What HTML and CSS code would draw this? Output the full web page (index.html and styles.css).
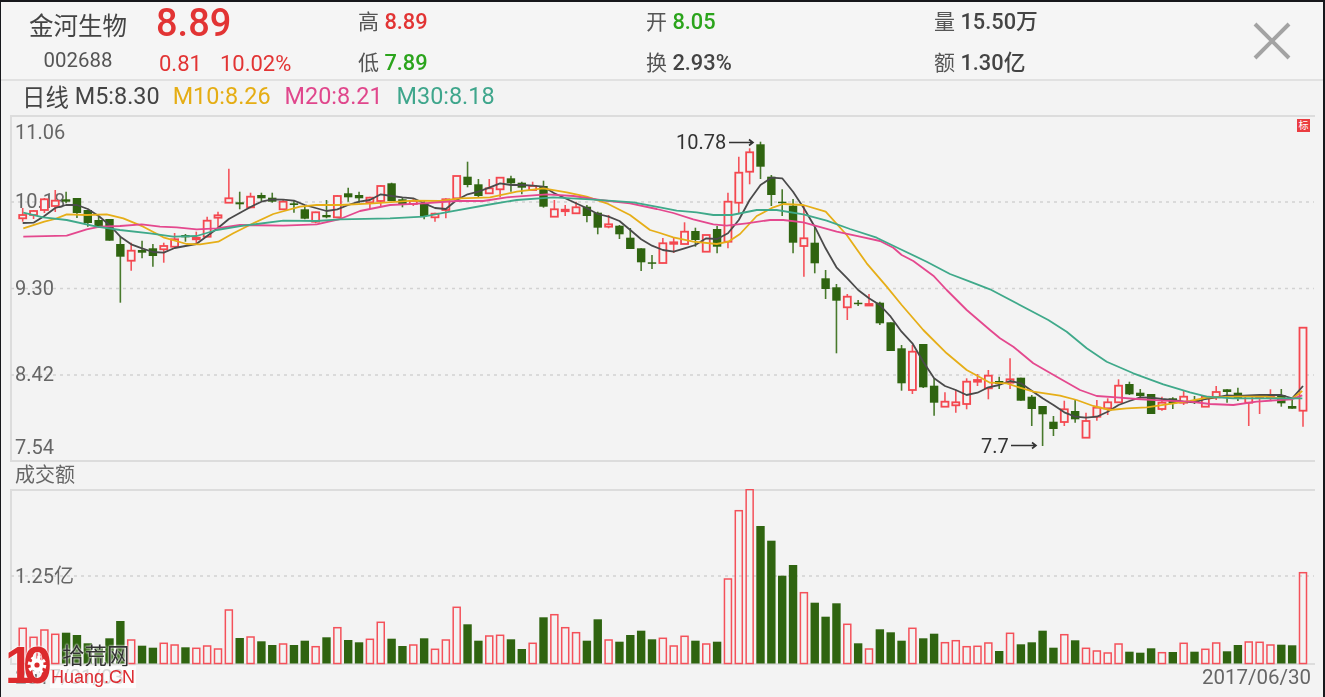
FILE: index.html
```html
<!DOCTYPE html>
<html lang="zh-CN">
<head>
  <meta charset="UTF-8">
  <title>金河生物 002688</title>
  <link rel="stylesheet" href="styles.css">
</head>
<body>
  <div class="screen">
    <header class="quote">
      <div class="stock">
        <div class="stock-name">金河生物</div>
        <div class="stock-code">002688</div>
      </div>
      <div class="price">
        <div class="price-now">8.89</div>
        <div class="price-change"><span>0.81</span><span>10.02%</span></div>
      </div>
      <div class="stats">
        <div class="stat"><span class="stat-key">高</span> <span class="up">8.89</span></div>
        <div class="stat"><span class="stat-key">开</span> <span class="down">8.05</span></div>
        <div class="stat"><span class="stat-key">量</span> 15.50万</div>
        <div class="stat"><span class="stat-key">低</span> <span class="down">7.89</span></div>
        <div class="stat"><span class="stat-key">换</span> 2.93%</div>
        <div class="stat"><span class="stat-key">额</span> 1.30亿</div>
      </div>
      <svg class="close" viewBox="0 0 38 38">
        <path d="M2 2L36 36M36 2L2 36"/>
      </svg>
    </header>

    <div class="legend">
      <span class="legend-period">日线</span>
      <span class="ma5">M5:8.30</span>
      <span class="ma10">M10:8.26</span>
      <span class="ma20">M20:8.21</span>
      <span class="ma30">M30:8.18</span>
    </div>

    <div class="panel panel-price">
      <svg id="priceChart" viewBox="10 115 1305 347"></svg>
      <span class="badge">标</span>
    </div>

    <div class="volume-title">成交额</div>

    <div class="panel panel-volume">
      <svg id="volumeChart" viewBox="10 489 1305 176"></svg>
    </div>

    <div class="dates">
      <span>2017/01/03</span>
      <span>2017/06/30</span>
    </div>

    <div class="watermark">
      <div class="wm-logo">10</div>
      <svg class="wm-gear" viewBox="0 0 20 20">
        <circle class="wm-teeth" cx="10" cy="10" r="7.5"/>
        <circle class="wm-disc" cx="10" cy="10" r="6.5"/>
        <circle class="wm-hub" cx="10" cy="10" r="2.6"/>
      </svg>
      <div class="wm-name">拾荒网</div>
      <div class="wm-url">Huang.CN</div>
    </div>
  </div>
  <script src="script.js"></script>
</body>
</html>
```

FILE: styles.css
```css
* {
  box-sizing: border-box;
}

body {
  margin: 0;
  background: #17181c;
  overflow: hidden;
}

.screen {
  position: relative;
  margin: 2px 2px 0 1px;
  height: 695px;
  background: #f3f3f3;
  color: #555;
  font-family: Roboto, "Noto Sans CJK SC", sans-serif;
  font-size: 20px;
  filter: blur(.35px);
}

.quote {
  display: flex;
  height: 79px;
  padding-left: 28px;
  background: #f5f5f5;
  border-bottom: 2px solid #e1e1e1;
}

.stock {
  width: 128px;
  padding-top: 9px;
}

.stock-name {
  width: 98px;
  font-size: 24.5px;
  line-height: 32px;
  text-align: center;
  color: #444;
}

.stock-code {
  width: 98px;
  margin-top: 2px;
  font-size: 20.4px;
  line-height: 30px;
  text-align: center;
}

.price {
  width: 201px;
  margin-left: -1px;
  color: #e23434;
}

.price-now {
  height: 42px;
  font-size: 38px;
  font-weight: 500;
  line-height: 42px;
}

.price-change {
  display: flex;
  gap: 18px;
  margin: 4px 0 0 3px;
  font-size: 22px;
  line-height: 32px;
}

.stats {
  display: grid;
  grid-template-columns: repeat(3, 288px);
  grid-auto-rows: 41px;
  margin: -1px 0 0 1px;
  font-size: 21.8px;
  font-weight: 500;
  line-height: 41px;
  color: #444;
}

.stat-key {
  font-size: 21px;
  font-weight: 400;
  color: #555;
}

.up {
  color: #e23434;
}

.down {
  color: #2ba41c;
}

.close {
  width: 38px;
  height: 38px;
  margin: 20px 0 0 31px;
  fill: none;
  stroke: #a3a3a3;
  stroke-width: 4;
}

.legend {
  display: flex;
  height: 34px;
  align-items: center;
  padding: 0 0 4px 21px;
  font-size: 23.4px;
  color: #444;
}

.legend-period {
  margin-right: 6px;
}

.ma10 {
  margin-left: 13px;
  color: #e5ad14;
}

.ma20 {
  margin-left: 14px;
  color: #e0478c;
}

.ma30 {
  margin-left: 14px;
  color: #3fa68c;
}

.panel {
  position: relative;
  margin-left: 9px;
  width: 1305px;
}

.panel svg {
  display: block;
  width: 1305px;
}

.panel-price svg {
  height: 347px;
}

.panel-volume svg {
  height: 176px;
}

.frame {
  fill: none;
  stroke: #dcdcdc;
  stroke-width: 2;
}

.grid {
  stroke: #d2d2d2;
  stroke-width: 1.3;
  stroke-dasharray: 3 4;
}

.axis-label {
  fill: #666;
  font-size: 20px;
}

.mark-label {
  fill: #333;
  font-size: 20px;
}

.mark-arrow {
  fill: none;
  stroke: #333;
  stroke-width: 1.6;
}

.wick-up {
  stroke: #f4535b;
  stroke-width: 1.6;
}

.wick-down {
  stroke: #48792c;
  stroke-width: 1.6;
}

.body-up {
  fill: #f3f3f3;
  stroke: #f4474f;
  stroke-width: 1.8;
}

.body-down {
  fill: #2f6410;
}

.bar-up {
  fill: none;
  stroke: #f4515a;
  stroke-width: 1.5;
}

.bar-down {
  fill: #2f6410;
}

.line {
  fill: none;
  stroke-width: 1.8;
  stroke-linejoin: round;
}

.line-5 {
  stroke: #4a4a4a;
}

.line-10 {
  stroke: #e6ae17;
}

.line-20 {
  stroke: #e4488e;
}

.line-30 {
  stroke: #3fa98a;
}

.badge {
  position: absolute;
  top: 4px;
  right: 5px;
  width: 13px;
  height: 13px;
  background: #ea3c40;
  color: #fff;
  font-size: 10px;
  line-height: 13px;
  text-align: center;
}

.volume-title {
  height: 27px;
  padding-left: 14px;
  line-height: 27px;
  color: #666;
}

.dates {
  display: flex;
  justify-content: space-between;
  width: 1310px;
  padding-left: 14px;
  height: 25px;
  font-size: 20.5px;
  line-height: 24px;
  color: #666;
}

.watermark {
  position: absolute;
  left: 4px;
  bottom: 5px;
  width: 132px;
  height: 48px;
}

.wm-logo {
  position: absolute;
  top: -7px;
  left: 0;
  font-family: "Liberation Sans", sans-serif;
  font-size: 52px;
  font-weight: bold;
  letter-spacing: -11px;
  line-height: 56px;
  color: #dc2a2c;
  text-shadow: 0 0 2px #fff, 0 0 2px #fff;
}

.wm-gear {
  position: absolute;
  top: 11px;
  left: 22px;
  width: 20px;
  height: 20px;
}

.wm-teeth {
  fill: none;
  stroke: #fff;
  stroke-width: 3.6;
  stroke-dasharray: 3 2.9;
}

.wm-disc {
  fill: #fff;
}

.wm-hub {
  fill: #dc2a2c;
}

.wm-name {
  position: absolute;
  top: -1px;
  left: 57px;
  font-size: 22.5px;
  line-height: 26px;
  color: #333;
  text-shadow: 0 0 2px #fff, 0 0 2px #fff;
}

.wm-url {
  position: absolute;
  top: 22px;
  left: 45px;
  padding: 0 1px;
  font-family: "Liberation Sans", sans-serif;
  font-size: 18px;
  line-height: 22px;
  color: #dc2a30;
  background: rgba(255, 255, 255, .75);
}
```

FILE: script.js
```js
// all chart values are y positions in page pixels, one candle every 10.85px
const STEP = 10.85;
const FIRST_X = 22.7;
const BAR_W = 7;
const NS = 'http://www.w3.org/2000/svg';

// [bodyTop, bodyBottom, high, low, up?]
const candles = [
  [215, 218.3, 208, 221.7, 1], [211, 215, 210, 219, 1], [199.3, 210, 198, 213, 1], [200.7, 206, 190, 212, 1],
  [199.3, 201.7, 191.7, 203.3, 0], [198, 213, 198, 218, 0], [210, 223, 210, 226.7, 0], [220, 226.7, 217, 228, 0],
  [219, 240.7, 219, 240.7, 0], [244, 256.7, 236.7, 302.7, 0], [250.7, 260.7, 242.7, 270.7, 1], [250, 252.7, 240.7, 258.3, 0],
  [248.3, 256, 244, 266.7, 0], [246, 249.3, 242.7, 262.7, 1], [239.3, 246.7, 233, 247, 1], [235, 237.3, 234, 241.7, 0],
  [237.7, 239.3, 231.7, 245, 1], [220.7, 236.7, 216.7, 237.3, 1], [215.3, 217.7, 211.7, 229.3, 1], [198.3, 202.7, 168.7, 202.7, 1],
  [202.3, 204.3, 191.7, 209.3, 0], [196.7, 207.3, 192.7, 208.3, 1], [195, 198.3, 192.7, 201, 0], [197.7, 201.7, 192.7, 202.7, 0],
  [201.7, 209.3, 200, 210, 1], [203.3, 205, 200.7, 212.7, 0], [209.3, 218.7, 205, 219.3, 0], [212.3, 221.7, 211.7, 223.3, 1],
  [215, 217.3, 200, 218.3, 0], [196, 217.3, 195, 218, 1], [193.3, 197.3, 187.7, 201.7, 0], [195, 198.3, 191.7, 202.7, 0],
  [197.7, 202.3, 196.7, 209, 1], [186, 201, 185, 206.7, 1], [183.3, 201, 182.7, 201, 0], [199.3, 204, 198, 207.3, 0],
  [201, 204, 198, 206, 1], [203.3, 216, 200.7, 219.3, 0], [213.7, 217.3, 212.7, 221.7, 1], [199.3, 210, 198.3, 218.3, 1],
  [176, 198.3, 176, 198.3, 1], [176.7, 185, 161.7, 187.3, 0], [184.3, 196, 179, 197.3, 0], [188.3, 193.3, 179, 193.3, 1],
  [177.7, 189.3, 177.7, 197.3, 1], [178.3, 183.3, 175.7, 191.7, 0], [182.7, 187.7, 181.7, 194.3, 0], [186, 190, 181.7, 190, 1],
  [186, 206.7, 180.7, 207.7, 0], [209.3, 216.7, 200, 216.7, 1], [209.7, 211, 205, 216, 1], [207.3, 213.3, 201.7, 213.3, 1],
  [206.7, 216, 205, 222.3, 0], [212.7, 227.7, 211.7, 234.3, 0], [224.3, 226.7, 215, 228.3, 1], [225.7, 234.3, 225, 239, 0],
  [237.7, 249, 228, 249, 0], [248.3, 262.3, 248.3, 271, 0], [262.3, 263, 255, 269, 0], [243.3, 263, 238, 263.3, 1],
  [242.3, 243.5, 238, 253, 1], [231.7, 244, 222.3, 244, 1], [231, 240, 227.7, 246.7, 0], [235, 251.7, 235, 251.7, 1],
  [229, 246.7, 226, 253.3, 0], [201.7, 241.7, 192.7, 248.3, 1], [172.7, 202.7, 156.7, 213.3, 1], [152.3, 171.7, 148.3, 184.3, 1],
  [144.3, 166.7, 141.7, 179, 0], [176.7, 195, 175, 206, 0], [201.7, 203, 189.3, 216, 0], [205.7, 242.7, 199, 253.3, 0],
  [238.3, 246, 205, 276.7, 1], [242.7, 263.3, 226.7, 273.3, 0], [278.3, 289, 270, 299, 0], [287.3, 300.7, 284, 353.3, 0],
  [296.7, 307.3, 294, 320, 1], [302.7, 303.3, 300, 306, 0], [304, 305.3, 294, 305.3, 1], [302.7, 323.3, 301.7, 325, 0],
  [322.3, 351, 322.3, 351, 0], [348.3, 383.3, 345, 390.7, 0], [351.7, 390, 345, 394, 1], [344, 387.3, 344, 388, 0],
  [385.7, 402.7, 378.3, 415.7, 0], [401.7, 406.7, 392.3, 406.7, 1], [402.3, 405.3, 390, 412.7, 1], [381.7, 404, 378.3, 409.3, 1],
  [380, 381.7, 374, 386, 1], [375.7, 388.3, 370, 399.3, 1], [381, 384, 376.7, 389, 0], [379.3, 382.7, 358.3, 389, 1],
  [377.7, 400.7, 377.7, 400.7, 0], [396.7, 409, 395, 426, 0], [406, 414.3, 406, 446, 0], [421.7, 429, 416, 436, 0],
  [409.3, 422, 400.7, 426, 1], [411, 419.3, 400, 422.7, 0], [421, 437.7, 412.7, 437.7, 1], [407.7, 416.7, 400, 420.7, 1],
  [402.3, 408.3, 398.3, 415, 1], [385.7, 402.3, 379.3, 402.7, 1], [384, 394.3, 381.7, 395, 0], [392.7, 396, 389, 398.3, 0],
  [394, 414, 394, 414, 0], [402.7, 409, 396.7, 410.7, 1], [398.3, 403.3, 397.3, 409, 0], [396.7, 402.7, 391, 405, 1],
  [400, 401.3, 396, 404, 0], [396.7, 406.7, 396, 407, 1], [392, 397.3, 386, 400, 1], [389.3, 392, 389.3, 402.7, 0],
  [392.7, 398.3, 387.7, 401, 0], [396, 402.7, 396, 426, 1], [396, 397.3, 395, 414, 1], [396, 397.3, 389.3, 400, 1],
  [395, 403.3, 389, 406.7, 0], [406, 408.7, 400, 408.7, 0], [327.7, 410.7, 327.7, 426.7, 1]
];

const volumes = [
  628.3, 637.3, 630, 634.3, 632.7, 635, 643.3, 648, 638.3, 621, 640, 645.7, 647.7, 643.3, 645, 647.3, 648.3, 646, 649, 610,
  638, 637, 641.3, 645, 644, 645, 640.7, 646.7, 637.3, 627.7, 640, 642.3, 639.3, 622.3, 638.7, 646, 645, 638.3, 649.3, 640,
  607.3, 624.3, 640.7, 636, 635.3, 639.3, 649, 643.3, 617.3, 614.7, 627.7, 632.7, 640.7, 619.3, 640, 641.7, 635, 630.7, 639.3, 638.3,
  646, 636.3, 640.7, 644, 641.7, 579, 510.7, 489.5, 526, 540.7, 575.7, 565, 592.7, 602.7, 616.7, 603.3, 624.3, 643.3, 649, 629.3,
  632.3, 640.7, 628.3, 638.3, 633.7, 642.7, 640.7, 646.7, 646.3, 643, 651, 633.3, 644.3, 642.3, 630.7, 647.7, 634.7, 640.3, 648.3, 651,
  653, 644, 651.7, 652.7, 648.3, 652.7, 652, 643.3, 651.7, 649.3, 643, 651.3, 645, 642, 642.3, 645, 644.7, 645.3, 572.7
];

const ma5 = [
  223, 222.7, 216, 208, 205, 205, 209, 216, 225, 236.7, 244.3, 248.3, 252, 252.7, 248, 246, 244, 236, 228, 219,
  213, 207, 201.7, 199.3, 199.7, 200.7, 205, 208, 211, 209.3, 205, 201.7, 200, 194.3, 196, 197.3, 198.3, 203.3, 208, 209,
  200, 194.3, 191.7, 187.7, 183.3, 185, 185, 185.7, 186.7, 193.3, 198.3, 203.3, 208.3, 214, 216.7, 221, 230, 239.3, 245.7, 250,
  251.7, 248.3, 245, 238.3, 239, 233.3, 220, 200, 185, 177.7, 178.3, 191.7, 208.3, 226.7, 248.3, 267.3, 278.3, 290, 298.3, 305,
  316.7, 331.7, 343.3, 361.7, 378.3, 386, 390, 395, 392.7, 387.3, 385, 381, 383.3, 390.7, 398.3, 405, 412.3, 416.7, 417.7, 416.7,
  411.7, 405, 401, 397.3, 397.7, 399, 400, 401.7, 402.3, 399, 397.3, 395.3, 396, 395.3, 395, 395, 395, 398.3, 386
];

const ma10 = '23.3,228.3 44.3,221.7 55,219 66.7,214.3 86.7,215 106.7,214.3 123.3,218.3 143.3,226.7 163.3,237.3 186.7,244 200,244.3 218.3,241.7 233.3,233.3 253.3,223.3 273.3,214 300,206.7 316.7,205 340,205 373,203.3 413,200.7 440,201 460,198.3 490,197.3 516.7,191.7 543.3,188.3 566.7,192.3 586.7,196.7 606.7,203.3 630,215 650,230 660,233 673.3,237.3 693.3,241.7 716.7,244 728.3,241.7 740,234 756.7,216 773.3,207.3 783.3,204 803.3,205 825.7,211.7 846.7,235 866.7,263.3 886.7,286.7 901.7,305 923.3,330 946.7,353.3 966.7,370 990,382.7 1006.7,383.3 1020,387.7 1033.3,391.7 1060,395.7 1076.7,400 1093.3,406 1110,410 1126.7,408.3 1146.7,407.3 1166.7,404.3 1190,401 1206.7,397.7 1236.7,396.7 1266.7,396.7 1291.3,399.3 1302.3,391';
const ma20 = '23.3,236.7 66.7,235.7 86.7,229.3 100,226.7 120,226 141.7,224.3 160,226.7 176.7,227.3 196.7,229.3 216.7,228.3 240,225 283.3,225.7 316.7,224.3 340,219 360,211 390,205 423.3,203.3 456.7,201 483.3,201 506.7,197.3 546.7,194.3 573.3,196 600,200 630,203.3 656.7,209 673.3,213 693.3,219.3 713.3,224.3 726.7,225.7 746.7,223.3 770,220 783.3,220 803.3,222.3 836.7,231.7 860,236.7 880,241 893.3,247.7 901.7,255 913.3,261 933.3,275.7 946.7,290 966.7,310 990,330 1000,338.3 1013.3,346.7 1033.3,363.3 1056.7,376.7 1080,390 1096.7,396 1116.7,397.3 1136.7,399 1163.3,400.7 1190,401.7 1210,404 1233.3,405 1256.7,401.7 1280,400 1291.3,399.3 1302.3,395.3';
const ma30 = '23.3,212.7 43.3,217.3 66.7,220 96.7,226.7 120,230 150,233.3 173.3,236.7 196.7,236 216.7,230 243.3,225.7 283.3,220.7 316.7,221 340,219.3 390,218.3 423.3,216.7 450,211.7 486.7,205 516.7,200 553.3,197.3 590,199.3 633.3,202.3 660,207.3 676.7,210.7 696.7,212.3 713.3,215 731.7,215 756.7,210 776.7,210 803.3,214.3 826.7,220.7 850,229 876.7,237.7 900,249 926.7,261.7 950,274 970,281.7 990,289.3 1048.3,320 1066.7,331.7 1086.7,348.3 1106.7,361.7 1133.3,373.3 1163.3,384.3 1190,392.3 1206.7,396.7 1233.3,398.3 1266.7,398.3 1302.3,398.3';

function add(svg, tag, attrs, text) {
  const el = document.createElementNS(NS, tag);
  Object.keys(attrs).forEach(k => el.setAttribute(k, attrs[k]));
  if (text) el.textContent = text;
  svg.appendChild(el);
}

function xAt(i) {
  return FIRST_X + STEP * i;
}

function drawGrid(svg, ys) {
  ys.forEach(y => add(svg, 'line', { class: 'grid', x1: 11, x2: 1314, y1: y, y2: y }));
}

function drawFrame(svg, left, top, bottom) {
  add(svg, 'path', { class: 'frame', d: `M1315 ${top}H${left}V${bottom}H1315` });
}

const price = document.getElementById('priceChart');
drawFrame(price, 11, 116, 461);
drawGrid(price, [202, 288.5, 375]);
[['11.06', 139], ['10.18', 208], ['9.30', 295], ['8.42', 381], ['7.54', 454]].forEach(([t, y]) => {
  add(price, 'text', { class: 'axis-label', x: 15, y }, t);
});

candles.forEach(([top, bottom, high, low, up], i) => {
  const x = xAt(i);
  add(price, 'line', { class: up ? 'wick-up' : 'wick-down', x1: x, x2: x, y1: high, y2: low });
  add(price, 'rect', {
    class: up ? 'body-up' : 'body-down',
    x: up ? x - BAR_W / 2 : x - BAR_W / 2 - 0.7,
    y: top,
    width: up ? BAR_W : BAR_W + 1.4,
    height: Math.max(bottom - top, 1.5)
  });
});

add(price, 'polyline', {
  class: 'line line-5',
  points: ma5.map((y, i) => `${xAt(i)},${y}`).join(' ')
});
add(price, 'polyline', { class: 'line line-10', points: ma10 });
add(price, 'polyline', { class: 'line line-20', points: ma20 });
add(price, 'polyline', { class: 'line line-30', points: ma30 });

add(price, 'text', { class: 'mark-label', x: 676, y: 149 }, '10.78');
add(price, 'path', { class: 'mark-arrow', d: 'M729 142.5H753M749 139.5L753 142.5L749 145.5' });
add(price, 'text', { class: 'mark-label', x: 981, y: 453 }, '7.7');
add(price, 'path', { class: 'mark-arrow', d: 'M1011 445.5H1036M1032 442.5L1036 445.5L1032 448.5' });

const volume = document.getElementById('volumeChart');
drawFrame(volume, 11, 490, 664);
drawGrid(volume, [576]);
add(volume, 'text', { class: 'axis-label', x: 15, y: 583 }, '1.25亿');

volumes.forEach((top, i) => {
  const x = xAt(i);
  if (candles[i][4]) {
    add(volume, 'rect', { class: 'bar-up', x: x - BAR_W / 2, y: top, width: BAR_W, height: 663.5 - top });
  } else {
    add(volume, 'rect', { class: 'bar-down', x: x - BAR_W / 2 - 0.7, y: top, width: BAR_W + 1.4, height: 663.5 - top });
  }
});
```
